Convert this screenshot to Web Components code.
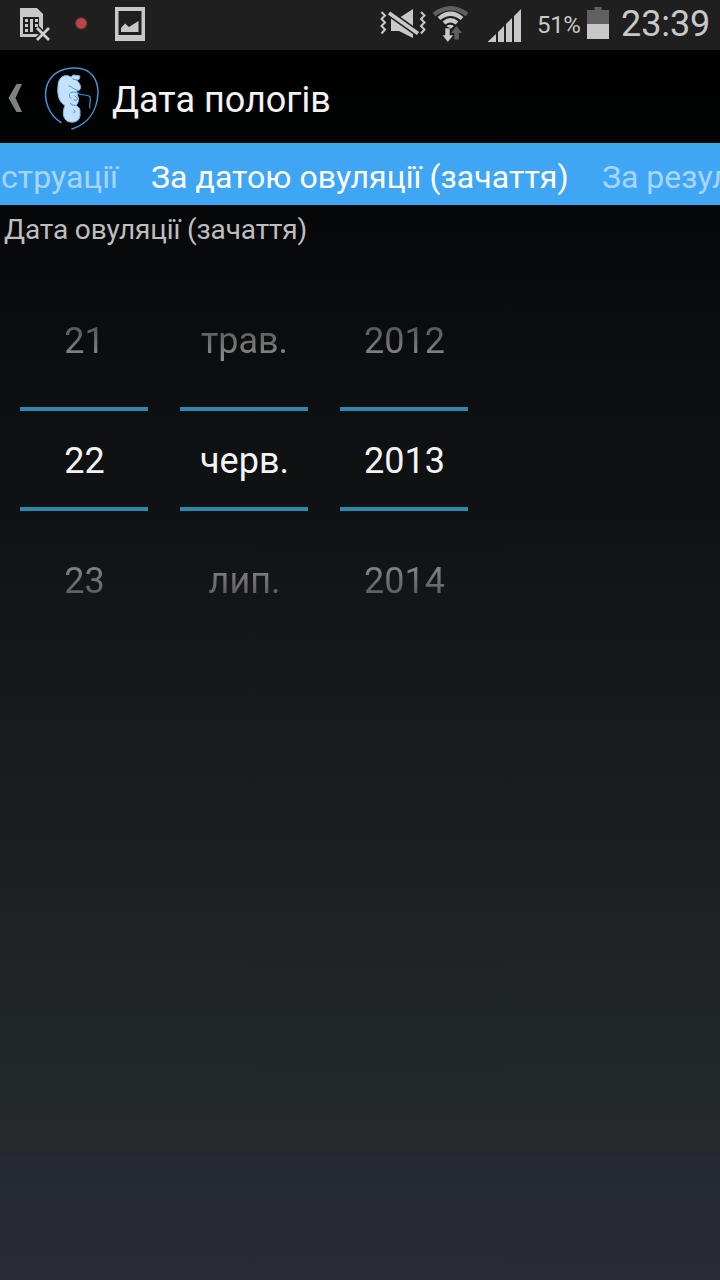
<!DOCTYPE html>
<html lang="uk">
<head>
<meta charset="utf-8">
<title>Дата пологів</title>
<style>
body{margin:0;font-family:Roboto,"Noto Sans",sans-serif;color:#f3f3f3;background:#000}
</style>
</head>
<body>
<due-date-app></due-date-app>
<script>
const define = (name, html) => customElements.define(name, class extends HTMLElement {
  constructor() {
    super();
    const t = document.createElement('template');
    t.innerHTML = html;
    this.attachShadow({mode: 'open'}).append(t.content.cloneNode(true));
  }
});

define('status-bar', `
<style>
:host{display:flex;height:50px;background:#1f1f1f;color:#c8c8c8;box-sizing:border-box;overflow:hidden}
svg{display:block;flex:none}
.pct{font-size:24px;line-height:50px;width:50px;white-space:nowrap;letter-spacing:-.35px}
.clock{font-size:36px;line-height:48px;white-space:nowrap;margin-left:1px;letter-spacing:-.1px}
</style>
<svg width="180" height="50" viewBox="0 0 180 50">
  <path fill="#c8c8c8" d="M20 8h17l6 6v17l-5 6H20z"/>
  <path fill="#1f1f1f" d="M23 17h16v17H23z"/>
  <path fill="#c8c8c8" d="M25 19h3v3h-3zm0 5h3v3h-3zm0 5h3v3h-3zM30 19h3v13h-3zM35 19h3v3h-3zm0 5h3v3h-3z"/>
  <path d="M37 28 49 40M49 28 37 40" stroke="#1f1f1f" stroke-width="6"/>
  <path d="M37 28 49 40M49 28 37 40" stroke="#d0d0d0" stroke-width="2.8"/>
  <circle cx="81.2" cy="23.3" r="6.3" fill="#502b2b"/><circle cx="81.2" cy="23.3" r="5.3" fill="#b94646"/>
  <path fill="#c8c8c8" fill-rule="evenodd" d="M115 7h30v34h-30zM118.500 11v24h23V11z"/>
  <path fill="#c8c8c8" d="M121 32v-4l4-4.500 4 3.500 9.500-6V32z"/>
</svg>
<svg width="357" height="50" viewBox="180 0 357 50">
  <g fill="none" stroke="#c8c8c8" stroke-width="2"><path d="M381.500 12l3.500 3.500-3.500 3.500 3.500 3.500-3.500 3.500 3.500 3.500-3.500 4"/><path d="M421 12l3.500 3.500-3.500 3.500 3.500 3.500-3.500 3.500 3.500 3.500-3.500 4"/></g>
  <path fill="#c8c8c8" d="M391 18h8l14-9v29l-14-7h-8z"/>
  <path d="M389 13 418 33.500" stroke="#1f1f1f" stroke-width="7"/>
  <path d="M389 13 418 33.500" stroke="#c8c8c8" stroke-width="3.800"/>
  <g fill="none"><path stroke="#606060" stroke-width="4.200" d="M434 14.500Q450.500 2 467 14.500"/><path stroke="#c8c8c8" stroke-width="4.200" d="M439 18.500Q450.500 9 462 18.500M444 23Q450.500 17.500 457 23"/></g>
  <path fill="#c8c8c8" d="M446.500 26Q450 23.500 454 26L450.500 29z"/>
  <path fill="#c8c8c8" stroke="#1f1f1f" stroke-width=".6" d="M445 28h5v7h3.700l-5.900 7.300-5.800-7.300h3z"/>
  <path fill="#606060" d="M456.500 26l5.500 7h-3.200v6.500h-4.500V33H451z"/>
  <path fill="#c8c8c8" d="M488 42v-.5l8-7.500V42zM498 42V32l6-6v16zM506 42V24l6-6v24zM514 42V16l7-7v33z"/>
</svg>
<span class="pct">51%</span>
<svg width="33" height="50" viewBox="587 0 33 50"><path fill="#606060" d="M594.500 7h7v3h7.500v14h-22V10h7.500z"/><path fill="#c8c8c8" d="M587 24h22v15h-22z"/></svg>
<span class="clock">23:39</span>`);

define('action-bar', `
<style>
:host{display:flex;height:93px;align-items:center}
svg{display:block;flex:none}
h1{margin:0;font-weight:400;font-size:36px;line-height:48px;padding-top:6px;white-space:nowrap}
</style>
<svg width="112" height="93" viewBox="0 50 112 93" fill="none">
  <path fill="#808080" d="M16.500 84H22l-6.500 14 6.500 14h-5.500L8.500 98z"/>
  <g stroke="#3d95dc" stroke-width="1.500" stroke-linecap="round" stroke-linejoin="round">
    <path d="M61 122.500C49 115 44 101 46 89 49 74 61 68 75 68 91 68 98 79 98 93 97 111 88 124 72 129"/>
    <path fill="#c3e1fa" stroke="#7dbdf0" stroke-width="1" d="M71 77C64 73 58 78 58 86 57 95 59 102 65 105.500 62 112 63 119 68 121.500 75 124 81 120 80 113 80.500 109 79 107 76 105.500 79 102 79.500 98 77 95L78.500 93C76 92 76 91 79 90.500 82 88 80.500 84 76.500 80L79 79.500 80 76 73.500 75z"/>
    <path d="M69 86C72 86 73 90 79 90.500M78 93C70 90 67 95 71 98.500M70 103q2 3 5 2.500M75 96C79 99 78 101 74 100M73 79 76.500 80M74 110q2 1 0 3" stroke-width="1"/>
    <path d="M78 93.500C83 96 86 94 90 96.500 91 101 89 104 90 108" stroke-width="1.200"/>
  </g>
</svg>
<h1><slot></slot></h1>`);

define('tab-strip', `
<style>
:host{display:flex;box-sizing:border-box;height:62px;background:#3fa6f6;border-top:3px solid #35b0e0;overflow:hidden;gap:33px;font-size:32px;line-height:62px;white-space:nowrap}
::slotted(span){flex:none;color:#a8d6fb}
::slotted(.active){color:#fff;width:418px;letter-spacing:.06px}
::slotted(.prev){width:118px;display:flex;justify-content:flex-end}
::slotted(.next){width:118px}
</style><slot></slot>`);

define('picker-wheel', `
<style>
:host{display:grid;width:128px;grid-template-rows:120px 120px 120px;line-height:122px;font-size:36px;text-align:center;white-space:nowrap}
.value{box-sizing:border-box;height:104px;line-height:100px;margin-top:7px;border:solid #2989ae;border-width:4px 0}
.value,.fade{text-indent:1px}
.fade{color:transparent;-webkit-background-clip:text;background-clip:text}
.top{background-image:linear-gradient(#505050 35%,#929292 70%)}
.bottom{background-image:linear-gradient(#929292 30%,#585858 65%)}
</style>
<div class="fade top"><slot name="before"></slot></div>
<div class="value"><slot></slot></div>
<div class="fade bottom"><slot name="after"></slot></div>`);

define('date-picker', `<style>:host{display:flex;gap:32px;padding:27px 20px 0}</style><slot></slot>`);

define('due-date-app', `
<style>
:host{display:flex;flex-direction:column;width:720px;height:1280px;overflow:hidden;background:linear-gradient(#000 50px,#010202 110px,#08090b 240px,#0e1012 430px,#111215 540px,#141719 620px,#1b1f20 850px,#23282a 1080px,#25292b 1148px,#252932 1158px,#292c35 1280px)}
.label{font-size:28px;line-height:50px;height:48px;padding-left:4px;color:#bebebe;white-space:nowrap;letter-spacing:-.13px}
</style>
<status-bar></status-bar>
<action-bar>Дата пологів</action-bar>
<tab-strip><span class="prev">струації</span><span class="active">За датою овуляції (зачаття)</span><span class="next">За результатами</span></tab-strip>
<div class="label">Дата овуляції (зачаття)</div>
<date-picker>
  <picker-wheel><span slot="before">21</span>22<span slot="after">23</span></picker-wheel>
  <picker-wheel><span slot="before">трав.</span>черв.<span slot="after">лип.</span></picker-wheel>
  <picker-wheel><span slot="before">2012</span>2013<span slot="after">2014</span></picker-wheel>
</date-picker>`);
</script>
</body>
</html>
